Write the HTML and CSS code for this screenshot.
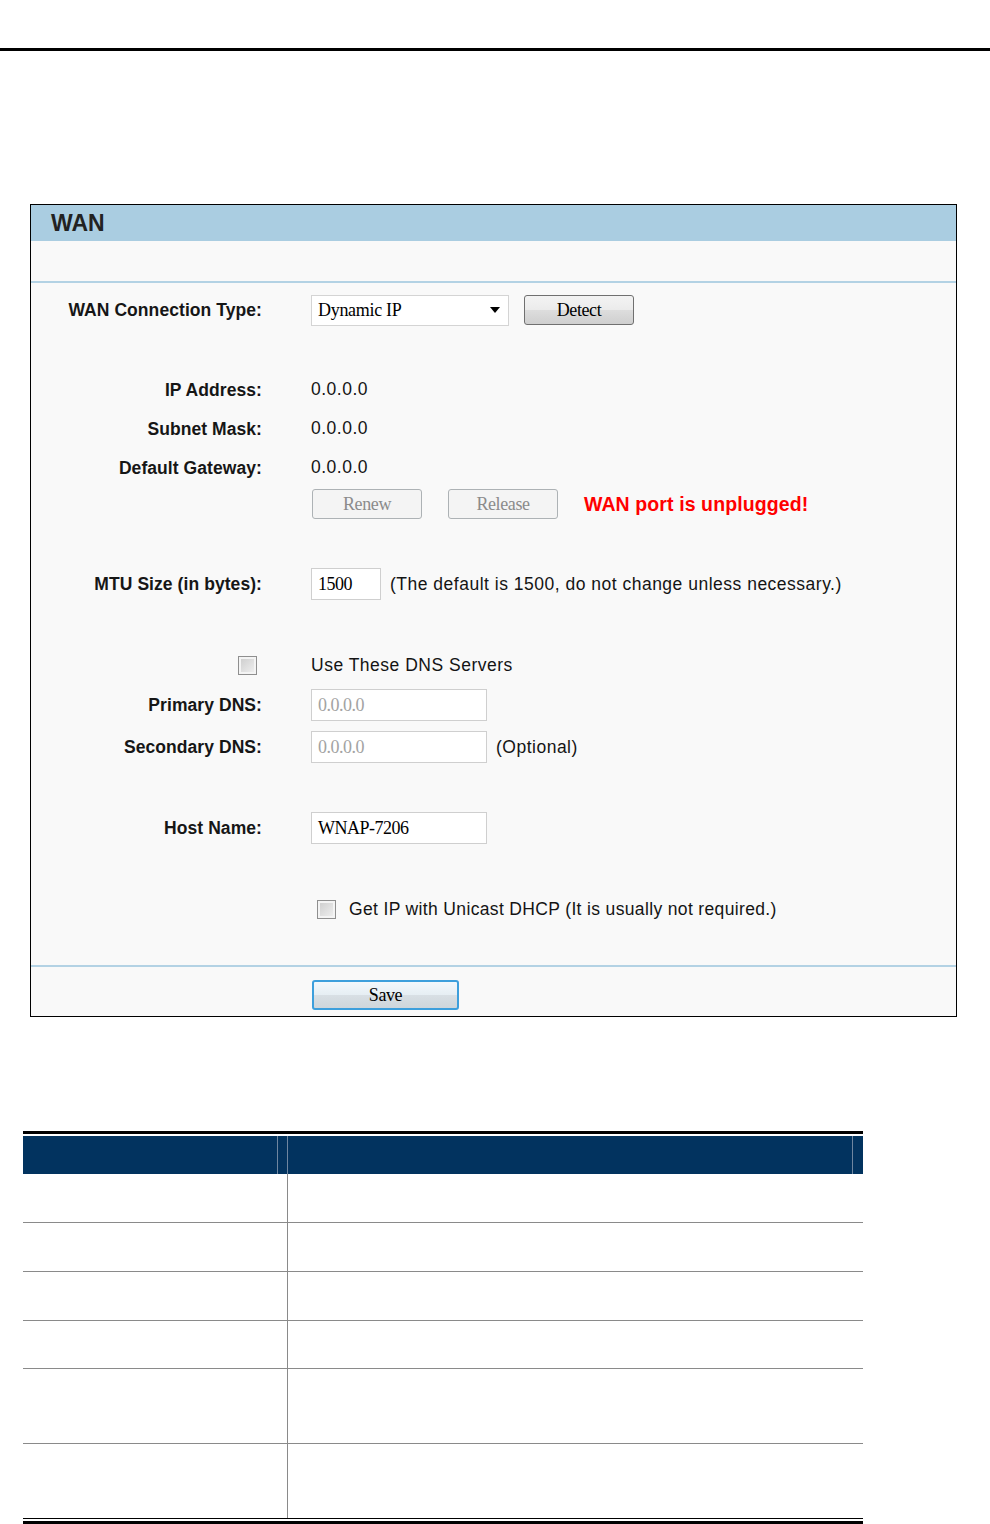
FILE: index.html
```html
<!DOCTYPE html>
<html>
<head>
<meta charset="utf-8">
<title>WAN</title>
<link rel="stylesheet" href="styles.css">
</head>
<body>
<div class="top-rule"></div>

<div class="panel">
  <div class="panel-title">WAN</div>
  <div class="panel-band"></div>
  <div class="panel-body">
    <div class="row h32">
      <div class="label">WAN Connection Type:</div>
      <div class="value">
        <div class="select">Dynamic IP<span class="caret"></span></div>
        <span class="btn btn-detect">Detect</span>
      </div>
    </div>

    <div class="row h39 mt44">
      <div class="label">IP Address:</div>
      <div class="value">0.0.0.0</div>
    </div>
    <div class="row h39">
      <div class="label">Subnet Mask:</div>
      <div class="value">0.0.0.0</div>
    </div>
    <div class="row h39">
      <div class="label">Default Gateway:</div>
      <div class="value">0.0.0.0</div>
    </div>
    <div class="row h34">
      <div class="label"></div>
      <div class="value">
        <span class="btn btn-disabled btn-renew">Renew</span>
        <span class="btn btn-disabled btn-release">Release</span>
        <span class="alert">WAN port is unplugged!</span>
      </div>
    </div>

    <div class="row h32 mt47">
      <div class="label">MTU Size (in bytes):</div>
      <div class="value">
        <span class="field field-mtu">1500</span>
        <span class="note">(The default is 1500, do not change unless necessary.)</span>
      </div>
    </div>

    <div class="row h30 mt50">
      <div class="label label-check"><span class="checkbox"></span></div>
      <div class="value">Use These DNS Servers</div>
    </div>
    <div class="row h32 mt9">
      <div class="label">Primary DNS:</div>
      <div class="value"><span class="field field-wide field-disabled">0.0.0.0</span></div>
    </div>
    <div class="row h32 mt10">
      <div class="label">Secondary DNS:</div>
      <div class="value">
        <span class="field field-wide field-disabled">0.0.0.0</span>
        <span class="note">(Optional)</span>
      </div>
    </div>

    <div class="row h32 mt49">
      <div class="label">Host Name:</div>
      <div class="value"><span class="field field-wide">WNAP-7206</span></div>
    </div>

    <div class="row h30 mt50">
      <div class="label"></div>
      <div class="value value-unicast">
        <span class="checkbox"></span>
        <span class="unicast-text">Get IP with Unicast DHCP (It is usually not required.)</span>
      </div>
    </div>
  </div>
  <div class="panel-foot">
    <div></div>
    <div class="foot-value"><span class="btn btn-save">Save</span></div>
  </div>
</div>

<div class="spec">
  <div class="spec-top"></div>
  <div class="spec-head">
    <div class="head-cell head-first"></div>
    <div class="head-gap"></div>
    <div class="head-cell head-second"></div>
    <div class="head-tail"></div>
  </div>
  <div class="spec-row r49"><div class="c1"></div><div class="c2"></div></div>
  <div class="spec-row r49"><div class="c1"></div><div class="c2"></div></div>
  <div class="spec-row r49"><div class="c1"></div><div class="c2"></div></div>
  <div class="spec-row r48"><div class="c1"></div><div class="c2"></div></div>
  <div class="spec-row r75"><div class="c1"></div><div class="c2"></div></div>
  <div class="spec-row r75 last"><div class="c1"></div><div class="c2"></div></div>
  <div class="spec-bottom"></div>
</div>
</body>
</html>
```

FILE: styles.css
```css
html, body {
  margin: 0;
  padding: 0;
  background: #ffffff;
}
body {
  font-family: "Liberation Sans", Arial, sans-serif;
  color: #111;
  height: 1524px;
  overflow: hidden;
}

.top-rule {
  height: 3px;
  margin-top: 48px;
  background: #000;
}

/* ---------- WAN panel ---------- */
.panel {
  margin: 153px 0 0 30px;
  width: 925px;
  border: 1px solid #000;
  background: #f9f9f9;
}
.panel-title {
  height: 36px;
  line-height: 37px;
  padding-left: 20px;
  background: #aacde1;
  font-weight: bold;
  font-size: 23px;
  color: #222;
}
.panel-band {
  height: 40px;
  border-bottom: 2px solid #b3d2e4;
}
.panel-body {
  padding-top: 11px;
  padding-bottom: 41px;
  border-bottom: 2px solid #b3d2e4;
}

.row {
  display: grid;
  grid-template-columns: 231px 1fr;
  column-gap: 49px;
  align-items: center;
  font-size: 17.5px;
}
.h30 { height: 30px; }
.h32 { height: 32px; }
.h34 { height: 34px; }
.h39 { height: 39px; }
.mt9 { margin-top: 9px; }
.mt10 { margin-top: 10px; }
.mt44 { margin-top: 44px; }
.mt47 { margin-top: 47px; }
.mt49 { margin-top: 49px; }
.mt50 { margin-top: 50px; }

.label {
  text-align: right;
  font-weight: bold;
  color: #161616;
  letter-spacing: 0.07px;
  padding-top: 1px;
}
.label-check {
  display: flex;
  justify-content: flex-end;
  padding-right: 5px;
}
.value {
  display: flex;
  align-items: center;
  color: #141414;
  white-space: nowrap;
  letter-spacing: 0.5px;
}

/* select */
.select {
  box-sizing: border-box;
  width: 198px;
  height: 31px;
  border: 1px solid #d4d4d4;
  background: #fff;
  display: flex;
  align-items: center;
  justify-content: space-between;
  padding: 0 7px 0 6px;
  font-family: "Liberation Serif", "Times New Roman", serif;
  font-size: 18px;
  letter-spacing: -0.3px;
  color: #000;
}
.caret {
  width: 0;
  height: 0;
  border-left: 5.5px solid transparent;
  border-right: 5.5px solid transparent;
  border-top: 6px solid #000;
  margin-right: 1px;
}

/* buttons */
.btn {
  box-sizing: border-box;
  display: inline-flex;
  align-items: center;
  justify-content: center;
  height: 30px;
  border: 1px solid #707070;
  border-radius: 3px;
  background: linear-gradient(#f3f3f3, #ebebeb 50%, #dddddd 51%, #cfcfcf);
  font-family: "Liberation Serif", "Times New Roman", serif;
  font-size: 18px;
  letter-spacing: -0.4px;
  color: #000;
}
.btn-detect {
  width: 110px;
  margin-left: 15px;
}
.btn-disabled {
  width: 110px;
  border-color: #adb2b5;
  background: #f4f4f4;
  color: #8b8b8b;
}
.btn-renew { margin-left: 1px; }
.btn-release { margin-left: 26px; }
.alert {
  margin-left: 26px;
  color: #ff0000;
  font-weight: bold;
  font-size: 19.5px;
  letter-spacing: 0.1px;
}
.btn-save {
  width: 147px;
  height: 30px;
  border: 2px solid #3d9fdc;
  background: linear-gradient(#f2f8fc, #e6eef3 50%, #d8dfe4 51%, #cfd6db);
}

/* fields */
.field {
  box-sizing: border-box;
  display: inline-flex;
  align-items: center;
  height: 32px;
  padding: 0 6px;
  border: 1px solid #cfcfcf;
  background: #fff;
  font-family: "Liberation Serif", "Times New Roman", serif;
  font-size: 18px;
  letter-spacing: -0.5px;
  color: #000;
}
.field-mtu { width: 70px; }
.field-wide { width: 176px; }
.field-disabled { color: #a3a3a3; }
.note { margin-left: 9px; }

/* checkbox */
.checkbox {
  box-sizing: border-box;
  display: inline-block;
  width: 19px;
  height: 19px;
  border: 1px solid #8f8f8f;
  box-shadow: inset 0 0 0 2px #f4f4f4;
  background: linear-gradient(135deg, #cbcbcb, #f2f2f2);
}
.value-unicast .checkbox { margin-left: 6px; }
.unicast-text {
  margin-left: 13px;
  letter-spacing: 0.35px;
}

.panel-foot {
  height: 49px;
  display: grid;
  grid-template-columns: 231px 1fr;
  column-gap: 49px;
}
.foot-value {
  padding: 13px 0 0 1px;
}

/* ---------- spec table ---------- */
.spec {
  margin: 114px 0 0 23px;
  width: 840px;
}
.spec-top {
  height: 3px;
  background: #000;
}
.spec-head {
  margin-top: 2px;
  height: 38px;
  background: #02335f;
  display: flex;
}
.head-cell {
  height: 100%;
  border-right: 1px solid #6f86a0;
}
.head-first { width: 254px; }
.head-gap { width: 9px; border-right: 1px solid #6f86a0; }
.head-second { width: 564px; }
.head-tail { flex: 1; }

.spec-row {
  box-sizing: border-box;
  display: grid;
  grid-template-columns: 265px 1fr;
  border-bottom: 1px solid #8a8a8a;
}
.spec-row.last { border-bottom-color: #000; }
.r48 { height: 48px; }
.r49 { height: 49px; }
.r75 { height: 75px; }
.c1 { border-right: 1px solid #8a8a8a; }
.spec-bottom {
  margin-top: 2px;
  height: 4px;
  background: #000;
}
```
